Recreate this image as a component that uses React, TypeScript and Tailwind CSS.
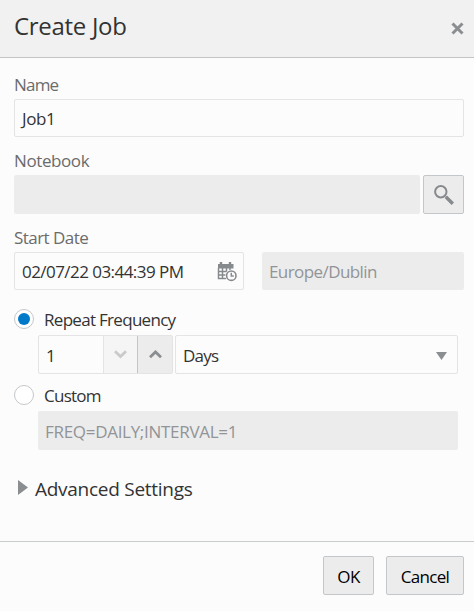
import React from "react";

function Label({ children, className = "" }: { children: React.ReactNode; className?: string }) {
  return <div className={`whitespace-nowrap text-[17px] leading-6 ${className}`}>{children}</div>;
}

function CalendarClock() {
  return (
    <svg width="20" height="21" viewBox="0 0 20 21" className="mb-[2px] shrink-0" fill="none" stroke="#878a8d">
      <path d="M1 3h15.5v4.5H1z" fill="#878a8d" stroke="none" />
      <path d="M4 1v3M13 1v3" strokeWidth="2.4" />
      <path d="M1.5 7v10.5H9M1 10.5h9M1 14h8M5.5 7v10.5M9.5 7v4M13 7v2" strokeWidth="1.5" />
      <circle cx="14.3" cy="14.7" r="6" fill="#fcfcfc" stroke="none" />
      <circle cx="14.3" cy="14.7" r="4.7" strokeWidth="1.6" />
      <path d="M14.3 11.8v3.2h2.5" strokeWidth="1.5" />
    </svg>
  );
}

function Radio({ checked }: { checked?: boolean }) {
  return (
    <span className="flex h-[20px] w-[20px] shrink-0 items-center justify-center rounded-full border border-[#c4c7ca] bg-white">
      {checked && <span className="h-[12px] w-[12px] rounded-full bg-[#0079c8]" />}
    </span>
  );
}

export default function App() {
  return (
    <div className="flex h-[611px] w-[474px] flex-col overflow-hidden bg-[#fcfcfc] font-['Open_Sans','Noto_Sans',sans-serif] text-[#333]">
      <header className="flex h-[58px] shrink-0 items-center justify-between border-b border-[#c4c4c4] bg-[#f1f1f1] pr-[10px] pl-[14px]">
        <h1 className="pb-[5px] text-[24px] leading-8 tracking-[-0.3px] whitespace-nowrap">Create Job</h1>
        <svg width="13" height="13" viewBox="0 0 13 13" stroke="#8b8e91" strokeWidth="3">
          <path d="M1.5 1.5l10 10M11.5 1.5l-10 10" />
        </svg>
      </header>
      <main className="flex h-[483px] shrink-0 flex-col pr-[10px] pl-[14px]">
        <Label className="mt-[15px] tracking-[-0.8px] text-[#6b6b6b]">Name</Label>
        <div className="mt-[2px] flex h-[38px] shrink-0 items-center rounded-[2px] border border-[#e4e4e4] px-[7px] pt-[2px]">
          <Label className="tracking-[-0.4px]">Job1</Label>
        </div>
        <Label className="mt-[12px] tracking-[-0.4px] text-[#6b6b6b]">Notebook</Label>
        <div className="mt-[2px] flex h-[39px] shrink-0 gap-[3px]">
          <div className="flex-1 rounded-[2px] bg-[#ececec]" />
          <button className="flex w-[41px] items-center justify-center rounded-[2px] border border-[#c4c7ca] bg-[#ececec]">
            <svg width="20" height="20" viewBox="0 0 20 20" fill="none" stroke="#878a8d">
              <circle cx="6.8" cy="6.8" r="5.7" strokeWidth="2" />
              <path d="M11.8 11.8l7 7" strokeWidth="3.4" />
            </svg>
          </button>
        </div>
        <Label className="mt-[12px] tracking-[-0.55px] text-[#6b6b6b]">Start Date</Label>
        <div className="mt-[2px] flex h-[38px] shrink-0 gap-[18px]">
          <div className="flex w-[230px] items-center justify-between rounded-[2px] border border-[#e4e4e4] pt-[2px] pr-[6px] pl-[7px]">
            <Label className="tracking-[-0.55px]">02/07/22 03:44:39 PM</Label>
            <CalendarClock />
          </div>
          <div className="flex flex-1 items-center rounded-[2px] bg-[#ececec] px-[7px] pt-[2px]">
            <Label className="tracking-[-0.58px] text-[#929497]">Europe/Dublin</Label>
          </div>
        </div>
        <div className="mt-[17px] flex h-[28px] shrink-0 items-start gap-[10px] pt-[2px]">
          <Radio checked />
          <Label className="-mt-[1px] tracking-[-0.7px]">Repeat Frequency</Label>
        </div>
        <div className="mr-[6px] ml-[24px] flex h-[39px] shrink-0 gap-[2px]">
          <div className="flex w-[135px] rounded-[2px] border border-[#e4e4e4]">
            <div className="flex w-[64px] items-center pt-[2px] pl-[7px]">
              <Label>1</Label>
            </div>
            <div className="flex w-[34px] items-center justify-center border-l border-[#e4e4e4] bg-[#f5f5f5]">
              <svg width="13" height="9" viewBox="0 0 13 9" fill="none" stroke="#cacaca" strokeWidth="2.8">
                <path d="M1 1.2l5.5 5.3L12 1.2" />
              </svg>
            </div>
            <div className="flex flex-1 items-center justify-center border-l border-[#c4c4c4] bg-[#ececec]">
              <svg width="13" height="9" viewBox="0 0 13 9" fill="none" stroke="#8b8e91" strokeWidth="2.8">
                <path d="M1 7.2l5.5-5.3L12 7.2" />
              </svg>
            </div>
          </div>
          <div className="flex flex-1 items-center justify-between rounded-[2px] border border-[#e4e4e4] pt-[2px] pr-[10px] pl-[7px]">
            <Label className="tracking-[-0.8px]">Days</Label>
            <svg width="11" height="8" viewBox="0 0 11 8" fill="#8b8e91">
              <path d="M0 0h11L5.5 8z" />
            </svg>
          </div>
        </div>
        <div className="flex h-[37px] shrink-0 items-start gap-[10px] pt-[11px]">
          <Radio />
          <Label className="-mt-[1px] tracking-[-0.75px]">Custom</Label>
        </div>
        <div className="mr-[6px] ml-[24px] flex h-[39px] shrink-0 items-center rounded-[2px] bg-[#ececec] px-[7px] pt-[2px]">
          <Label className="tracking-[-0.3px] text-[#929497]">FREQ=DAILY;INTERVAL=1</Label>
        </div>
        <div className="mt-[27px] flex h-6 shrink-0 items-center gap-[7px] pl-[4px]">
          <svg width="10" height="15" viewBox="0 0 10 15" fill="#8b8e91" className="mb-[4px]">
            <path d="M0 0v15l10-7.5z" />
          </svg>
          <h2 className="text-[19px] leading-6 tracking-[-0.27px] whitespace-nowrap">Advanced Settings</h2>
        </div>
      </main>
      <footer className="flex flex-1 items-start justify-end gap-[12px] border-t border-[#c8ccca] pt-[14px] pr-[10px] text-black">
        <button className="flex h-[39px] w-[51px] items-center justify-center rounded-[2px] border border-[#c4c7ca] bg-[#ececec] pt-[2px]">
          <Label className="tracking-[-0.5px]">OK</Label>
        </button>
        <button className="flex h-[39px] w-[78px] items-center justify-center rounded-[2px] border border-[#c4c7ca] bg-[#ececec] pt-[2px]">
          <Label className="tracking-[-0.7px]">Cancel</Label>
        </button>
      </footer>
    </div>
  );
}
